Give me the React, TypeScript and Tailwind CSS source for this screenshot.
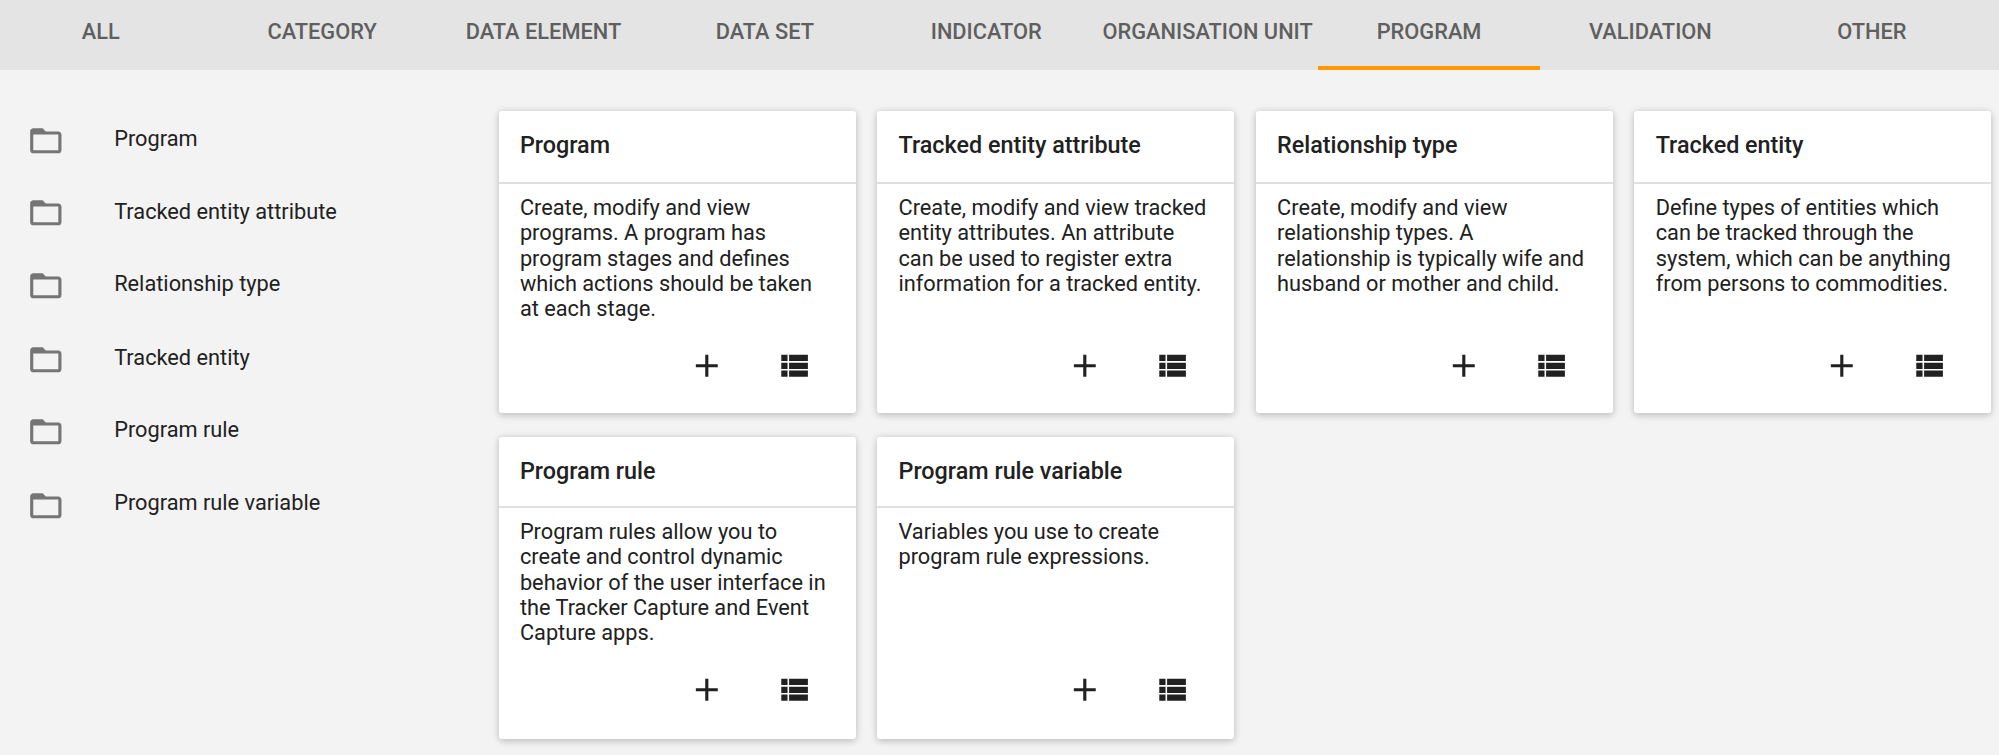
import React from "react";

const tabs = [
  "ALL",
  "CATEGORY",
  "DATA ELEMENT",
  "DATA SET",
  "INDICATOR",
  "ORGANISATION UNIT",
  "PROGRAM",
  "VALIDATION",
  "OTHER",
];

const items = [
  { label: "Program", row: "h-[72px]", text: "pt-[4px]" },
  { label: "Tracked entity attribute", row: "h-[73.5px]", text: "pt-[5px]" },
  { label: "Relationship type", row: "h-[73.5px]", text: "pt-[3.5px]" },
  { label: "Tracked entity", row: "h-[72px]", text: "pt-[4px]" },
  { label: "Program rule", row: "h-[74px]", text: "pt-[4px]" },
  { label: "Program rule variable", row: "h-[73px]", text: "pt-[3px]" },
];

type CardData = { title: string; lines: string[] };

const firstRow: CardData[] = [
  {
    title: "Program",
    lines: [
      "Create, modify and view",
      "programs. A program has",
      "program stages and defines",
      "which actions should be taken",
      "at each stage.",
    ],
  },
  {
    title: "Tracked entity attribute",
    lines: [
      "Create, modify and view tracked",
      "entity attributes. An attribute",
      "can be used to register extra",
      "information for a tracked entity.",
    ],
  },
  {
    title: "Relationship type",
    lines: [
      "Create, modify and view",
      "relationship types. A",
      "relationship is typically wife and",
      "husband or mother and child.",
    ],
  },
  {
    title: "Tracked entity",
    lines: [
      "Define types of entities which",
      "can be tracked through the",
      "system, which can be anything",
      "from persons to commodities.",
    ],
  },
];

const secondRow: CardData[] = [
  {
    title: "Program rule",
    lines: [
      "Program rules allow you to",
      "create and control dynamic",
      "behavior of the user interface in",
      "the Tracker Capture and Event",
      "Capture apps.",
    ],
  },
  {
    title: "Program rule variable",
    lines: ["Variables you use to create", "program rule expressions."],
  },
];

function Icon({ d }: { d: string }) {
  return (
    <svg viewBox="0 0 24 24" className="block size-[37.6px] shrink-0" fill="currentColor" aria-hidden="true">
      <path d={d} />
    </svg>
  );
}

const FOLDER =
  "M20 6h-8l-2-2H4c-1.1 0-1.99.9-1.99 2L2 18c0 1.1.9 2 2 2h16c1.1 0 2-.9 2-2V8c0-1.1-.9-2-2-2zm0 12H4V8h16v10z";
const PLUS = "M19 13h-6v6h-2v-6H5v-2h6V5h2v6h6v2z";
const LIST =
  "M4 14h4v-4H4v4zm0 5h4v-4H4v4zM4 9h4V5H4v4zm5 5h12v-4H9v4zm0 5h12v-4H9v4zM9 5v4h12V5H9z";

function Card({ card, head }: { card: CardData; head: string }) {
  return (
    <article className="flex h-[302px] w-[357px] shrink-0 flex-col rounded-[3px] bg-white shadow-[0_1.5px_9px_rgba(0,0,0,0.12),0_1.5px_6px_rgba(0,0,0,0.12)]">
      <h2
        className={`${head} shrink-0 border-b-2 border-[#e0e0e0] pt-[20.5px] pl-[21.3px] text-[23.35px] leading-[27px] font-medium whitespace-nowrap`}
      >
        {card.title}
      </h2>
      <div className="h-[162.8px] shrink-0 pt-[11.1px] pl-[21.3px] text-[21.75px] leading-[25.3px] whitespace-nowrap">
        {card.lines.map((line) => (
          <p key={line}>{line}</p>
        ))}
      </div>
      <div className="flex gap-[49.4px] pl-[189px]">
        <button aria-label="Add">
          <Icon d={PLUS} />
        </button>
        <button aria-label="List">
          <Icon d={LIST} />
        </button>
      </div>
    </article>
  );
}

export default function App() {
  return (
    <div className="h-[755px] w-[1999px] overflow-hidden bg-[#f3f3f3] font-['Roboto',sans-serif] text-[#212121]">
      <nav className="h-[70px] bg-[#e4e4e4]">
        <div className="-ml-[10px] flex h-full">
          {tabs.map((tab) => (
            <button
              key={tab}
              className={`flex w-[221.4px] shrink-0 justify-center border-b-4 pt-[19px] text-[21.8px] leading-[26px] font-medium whitespace-nowrap text-[#5f5f5f] ${
                tab === "PROGRAM" ? "border-[#ff9800]" : "border-transparent"
              }`}
            >
              {tab}
            </button>
          ))}
        </div>
      </nav>
      <div className="flex">
        <aside className="w-[498.6px] shrink-0 pt-[51.5px] pl-[27.2px]">
          {items.map((item) => (
            <div key={item.label} className={`${item.row} flex`}>
              <span className="w-[87px] text-[#757575]">
                <Icon d={FOLDER} />
              </span>
              <span className={`${item.text} text-[21.75px] leading-[26px] whitespace-nowrap`}>{item.label}</span>
            </div>
          ))}
        </aside>
        <main className="flex flex-col gap-[24px] pt-[41px]">
          <div className="flex gap-[21.6px]">
            {firstRow.map((card) => (
              <Card key={card.title} card={card} head="h-[73px]" />
            ))}
          </div>
          <div className="flex gap-[21.6px]">
            {secondRow.map((card) => (
              <Card key={card.title} card={card} head="h-[71px]" />
            ))}
          </div>
        </main>
      </div>
    </div>
  );
}
